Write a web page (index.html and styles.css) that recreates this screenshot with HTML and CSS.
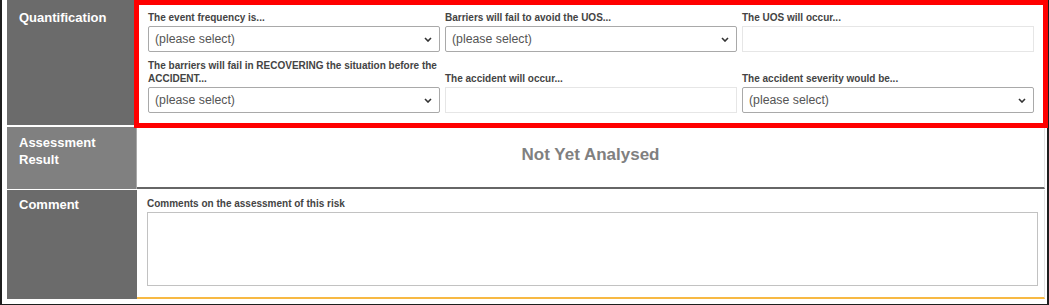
FILE: index.html
```html
<!DOCTYPE html>
<html lang="en">
<head>
    <meta charset="UTF-8">
    <meta name="viewport" content="width=device-width, initial-scale=1.0">
    <title>Risk Assessment</title>
    <link rel="stylesheet" href="styles.css">
</head>
<body>

    <div class="frame">
        <div class="row">
            <div class="label label-top">Quantification</div>
            <div class="cell quant">
                <div class="field">
                    <label>The event frequency is...</label>
                    <div class="select-wrap">
                        <select><option>(please select)</option></select>
                        <svg class="chev" width="8" height="5" viewBox="0 0 8 5"><path d="M1 1l3 3 3-3" /></svg>
                    </div>
                </div>
                <div class="field">
                    <label>Barriers will fail to avoid the UOS...</label>
                    <div class="select-wrap">
                        <select><option>(please select)</option></select>
                        <svg class="chev" width="8" height="5" viewBox="0 0 8 5"><path d="M1 1l3 3 3-3" /></svg>
                    </div>
                </div>
                <div class="field">
                    <label>The UOS will occur...</label>
                    <input type="text" readonly>
                </div>
                <div class="field">
                    <label>The barriers will fail in RECOVERING the situation before the ACCIDENT...</label>
                    <div class="select-wrap">
                        <select><option>(please select)</option></select>
                        <svg class="chev" width="8" height="5" viewBox="0 0 8 5"><path d="M1 1l3 3 3-3" /></svg>
                    </div>
                </div>
                <div class="field">
                    <label>The accident will occur...</label>
                    <input type="text" readonly>
                </div>
                <div class="field">
                    <label>The accident severity would be...</label>
                    <div class="select-wrap">
                        <select><option>(please select)</option></select>
                        <svg class="chev" width="8" height="5" viewBox="0 0 8 5"><path d="M1 1l3 3 3-3" /></svg>
                    </div>
                </div>
            </div>
        </div>

        <div class="row row-result">
            <div class="label label-light">Assessment Result</div>
            <div class="cell result">Not Yet Analysed</div>
        </div>

        <div class="row">
            <div class="label">Comment</div>
            <div class="cell comment">
                <label>Comments on the assessment of this risk</label>
                <textarea></textarea>
            </div>
        </div>

        <!-- annotation box drawn over the quantification row -->
        <div class="highlight"></div>
    </div>

</body>
</html>
```

FILE: styles.css
```css
body {
    margin: 0;
    font-family: "Liberation Sans", Arial, sans-serif;
    background: #fff;
}
.frame {
    position: relative;
    border-left: 2px solid #1e1e1e;
    border-right: 2px solid #1e1e1e;
    border-bottom: 3px solid #1e1e1e;
    padding: 0 2px 3px 5px;
}
.row {
    display: grid;
    grid-template-columns: 130px 1fr;
    margin-bottom: 2px;
}
.row-result {
    margin-bottom: 1px;
}
.row:last-of-type {
    margin-bottom: 0;
}
.label {
    background-color: #6b6b6b;
    color: #fff;
    font-size: 13px;
    font-weight: bold;
    line-height: 16.5px;
    padding: 7px 10px 0 12px;
}
.label-top {
    padding-top: 10px;
}
.label-light {
    background-color: #808080;
    padding-top: 8px;
    border-right: 1px solid #a8a8a8;
}
.cell {
    background: #fff;
    border-right: 1px solid #e2e2e2;
}
.quant {
    display: grid;
    grid-template-columns: repeat(3, 1fr);
    column-gap: 5px;
    row-gap: 7px;
    padding: 11px 10px 12px 11px;
}
.field {
    display: flex;
    flex-direction: column;
    justify-content: flex-end;
}
label {
    display: block;
    font-size: 10px;
    font-weight: bold;
    line-height: 13px;
    color: #444;
    margin-bottom: 2px;
}
.select-wrap {
    position: relative;
}
select {
    appearance: none;
    -webkit-appearance: none;
    width: 100%;
    height: 26px;
    border: 1px solid #a9a9a9;
    border-radius: 2px;
    background: #fff;
    color: #555;
    font-family: "Liberation Sans", Arial, sans-serif;
    font-size: 12.3px;
    padding: 0 20px 0 6px;
    margin: 0;
    display: block;
}
.chev {
    position: absolute;
    right: 8px;
    top: 50%;
    margin-top: -2px;
    fill: none;
    stroke: #333;
    stroke-width: 1.6;
}
input {
    display: block;
    width: 100%;
    height: 26px;
    box-sizing: border-box;
    border: 1px solid #e6e6e6;
    margin: 0;
    padding: 0;
    background: #fff;
}
.result {
    text-align: center;
    font-size: 17px;
    font-weight: bold;
    color: #808080;
    line-height: 20px;
    padding: 18px 0 22px 0;
    border-bottom: 2px solid #666;
}
.comment {
    padding: 7px 6px 11px 10px;
    border-bottom: 2px solid #f7b944;
}
textarea {
    display: block;
    width: 100%;
    height: 74px;
    box-sizing: border-box;
    border: 1px solid #c2c2c2;
    resize: none;
    margin: 0;
}
.highlight {
    position: absolute;
    left: 132px;
    top: 0;
    width: 914px;
    height: 128px;
    box-sizing: border-box;
    border: 5px solid #ff0000;
    pointer-events: none;
}
```
